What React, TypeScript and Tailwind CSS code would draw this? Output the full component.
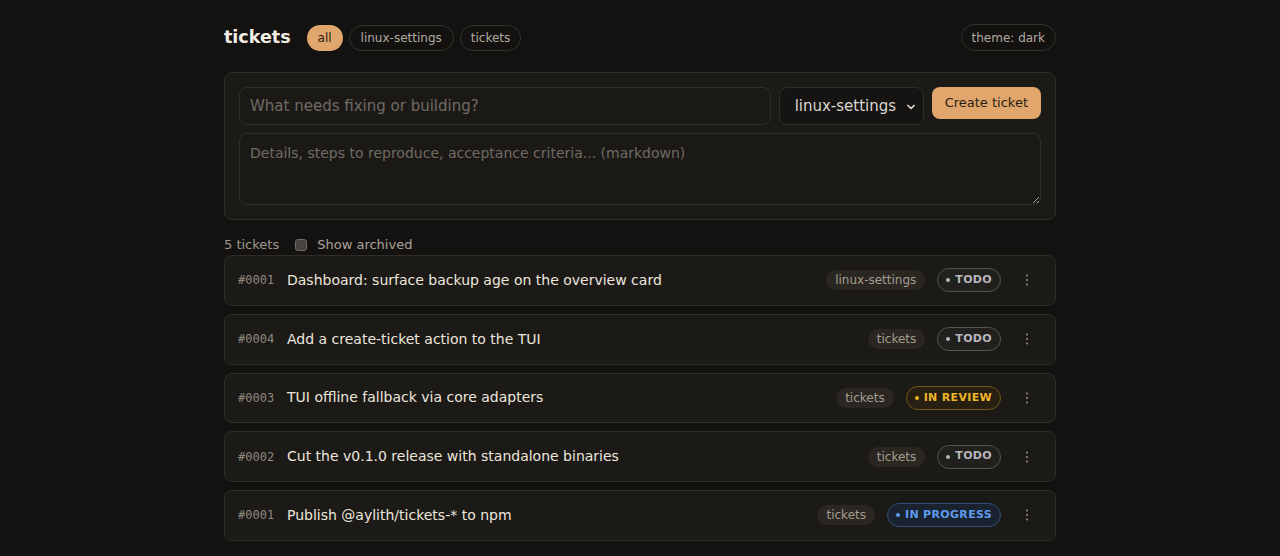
import { ChevronDown } from "lucide-react";

type Status = "todo" | "review" | "progress";

const tickets: { id: string; title: string; project: string; status: Status }[] = [
	{ id: "#0001", title: "Dashboard: surface backup age on the overview card", project: "linux-settings", status: "todo" },
	{ id: "#0004", title: "Add a create-ticket action to the TUI", project: "tickets", status: "todo" },
	{ id: "#0003", title: "TUI offline fallback via core adapters", project: "tickets", status: "review" },
	{ id: "#0002", title: "Cut the v0.1.0 release with standalone binaries", project: "tickets", status: "todo" },
	{ id: "#0001", title: "Publish @aylith/tickets-* to npm", project: "tickets", status: "progress" },
];

const statusStyles: Record<Status, { label: string; badge: string; dot: string }> = {
	todo: { label: "TODO", badge: "border-[#56524c] bg-[#22201d] text-[#b7b6bd]", dot: "bg-[#b7b6bd]" },
	review: { label: "IN REVIEW", badge: "border-[#735617] bg-[#261f12] text-[#efb52a]", dot: "bg-[#efb52a]" },
	progress: { label: "IN PROGRESS", badge: "border-[#2e4f7a] bg-[#1a2230] text-[#5d9cec]", dot: "bg-[#5d9cec]" },
};

function Kebab() {
	return (
		<button className="w-6 h-6 flex items-center justify-center text-[#8d877d]">
			<svg width="4" height="14" viewBox="0 0 4 14" fill="currentColor">
				<circle cx="2" cy="2.5" r="1.1" />
				<circle cx="2" cy="7" r="1.1" />
				<circle cx="2" cy="11.5" r="1.1" />
			</svg>
		</button>
	);
}

export default function App() {
	return (
		<div className="min-h-screen bg-[#131211] text-[#e9e3d9] font-['DejaVu_Sans',sans-serif]">
			<div className="w-[832px] mx-auto pt-6">
				<header className="flex items-center h-[27px] mb-[21px]">
					<h1 className="text-[17.5px] font-bold text-[#f2ede4] mr-4">tickets</h1>
					<nav className="flex items-center gap-[6px]">
						<span className="h-[26px] px-[11px] flex items-center rounded-full bg-[#e0a66c] text-[#2a1e12] text-[12px]">all</span>
						<span className="h-[26px] px-[11px] flex items-center rounded-full border border-[#35312c] text-[#b2aa9e] text-[12px]">linux-settings</span>
						<span className="h-[26px] px-[10px] flex items-center rounded-full border border-[#35312c] text-[#b2aa9e] text-[12px]">tickets</span>
					</nav>
					<span className="ml-auto h-[27px] px-[10px] flex items-center rounded-full border border-[#35312c] text-[#b2aa9e] text-[12px]">theme: dark</span>
				</header>

				<form className="rounded-lg border border-[#302c28] bg-[#1c1a17] p-[14px] flex flex-col gap-2">
					<div className="flex items-start gap-2">
						<input
							placeholder="What needs fixing or building?"
							className="flex-1 h-[38px] px-[10px] rounded-lg border border-[#302c28] bg-[#1b1916] text-[15px] text-[#e9e3d9] placeholder-[#716b63] outline-none"
						/>
						<div className="relative w-[145px] h-[38px] rounded-lg border border-[#302c28] bg-[#161412] flex items-center pl-[15px] text-[15px] text-[#dcd7cf]">
							linux-settings
							<ChevronDown size={12} strokeWidth={3.5} className="absolute right-[6px] top-[13px] text-[#dcd7cf]" />
						</div>
						<button type="button" className="h-8 px-[13px] rounded-lg bg-[#e0a66c] text-[#2a1e12] text-[13px]">
							Create ticket
						</button>
					</div>
					<textarea
						placeholder="Details, steps to reproduce, acceptance criteria... (markdown)"
						className="h-[72px] px-[10px] py-[9px] rounded-lg border border-[#302c28] bg-[#1b1916] text-[14px] text-[#e9e3d9] placeholder-[#716b63] outline-none resize-y"
					/>
				</form>

				<div className="flex items-center mt-[17px] mb-[2px] h-4 text-[13px]">
					<span className="text-[#9d968b]">5 tickets</span>
					<label className="flex items-center ml-4 text-[#aaa296]">
						<span className="w-3 h-3 rounded-[3px] border border-[#6e6964] bg-[#454240] mr-[10px]" />
						Show archived
					</label>
				</div>

				<ul className="flex flex-col gap-2">
					{tickets.map((t, i) => {
						const s = statusStyles[t.status];
						return (
							<li
								key={i}
								className="h-[50.75px] flex items-center rounded-lg border border-[#302c28] bg-[#1c1a17] pl-[13px] pr-4"
							>
								<span className="font-['DejaVu_Sans_Mono',monospace] text-[12px] text-[#8d877d] w-[36px]">{t.id}</span>
								<span className="ml-[13px] text-[14px] text-[#ece6dc]">{t.title}</span>
								<span className="ml-auto h-5 px-[9px] flex items-center rounded-full bg-[#2a2621] text-[12px] text-[#a59c8f]">
									{t.project}
								</span>
								<span className={`ml-3 h-6 pl-[8px] pr-[8px] flex items-center gap-[5px] rounded-full border text-[11px] font-bold tracking-[0.03em] ${s.badge}`}>
									<span className={`w-1 h-1 rounded-full ${s.dot}`} />
									{s.label}
								</span>
								<span className="ml-[14px]">
									<Kebab />
								</span>
							</li>
						);
					})}
				</ul>
			</div>
		</div>
	);
}
